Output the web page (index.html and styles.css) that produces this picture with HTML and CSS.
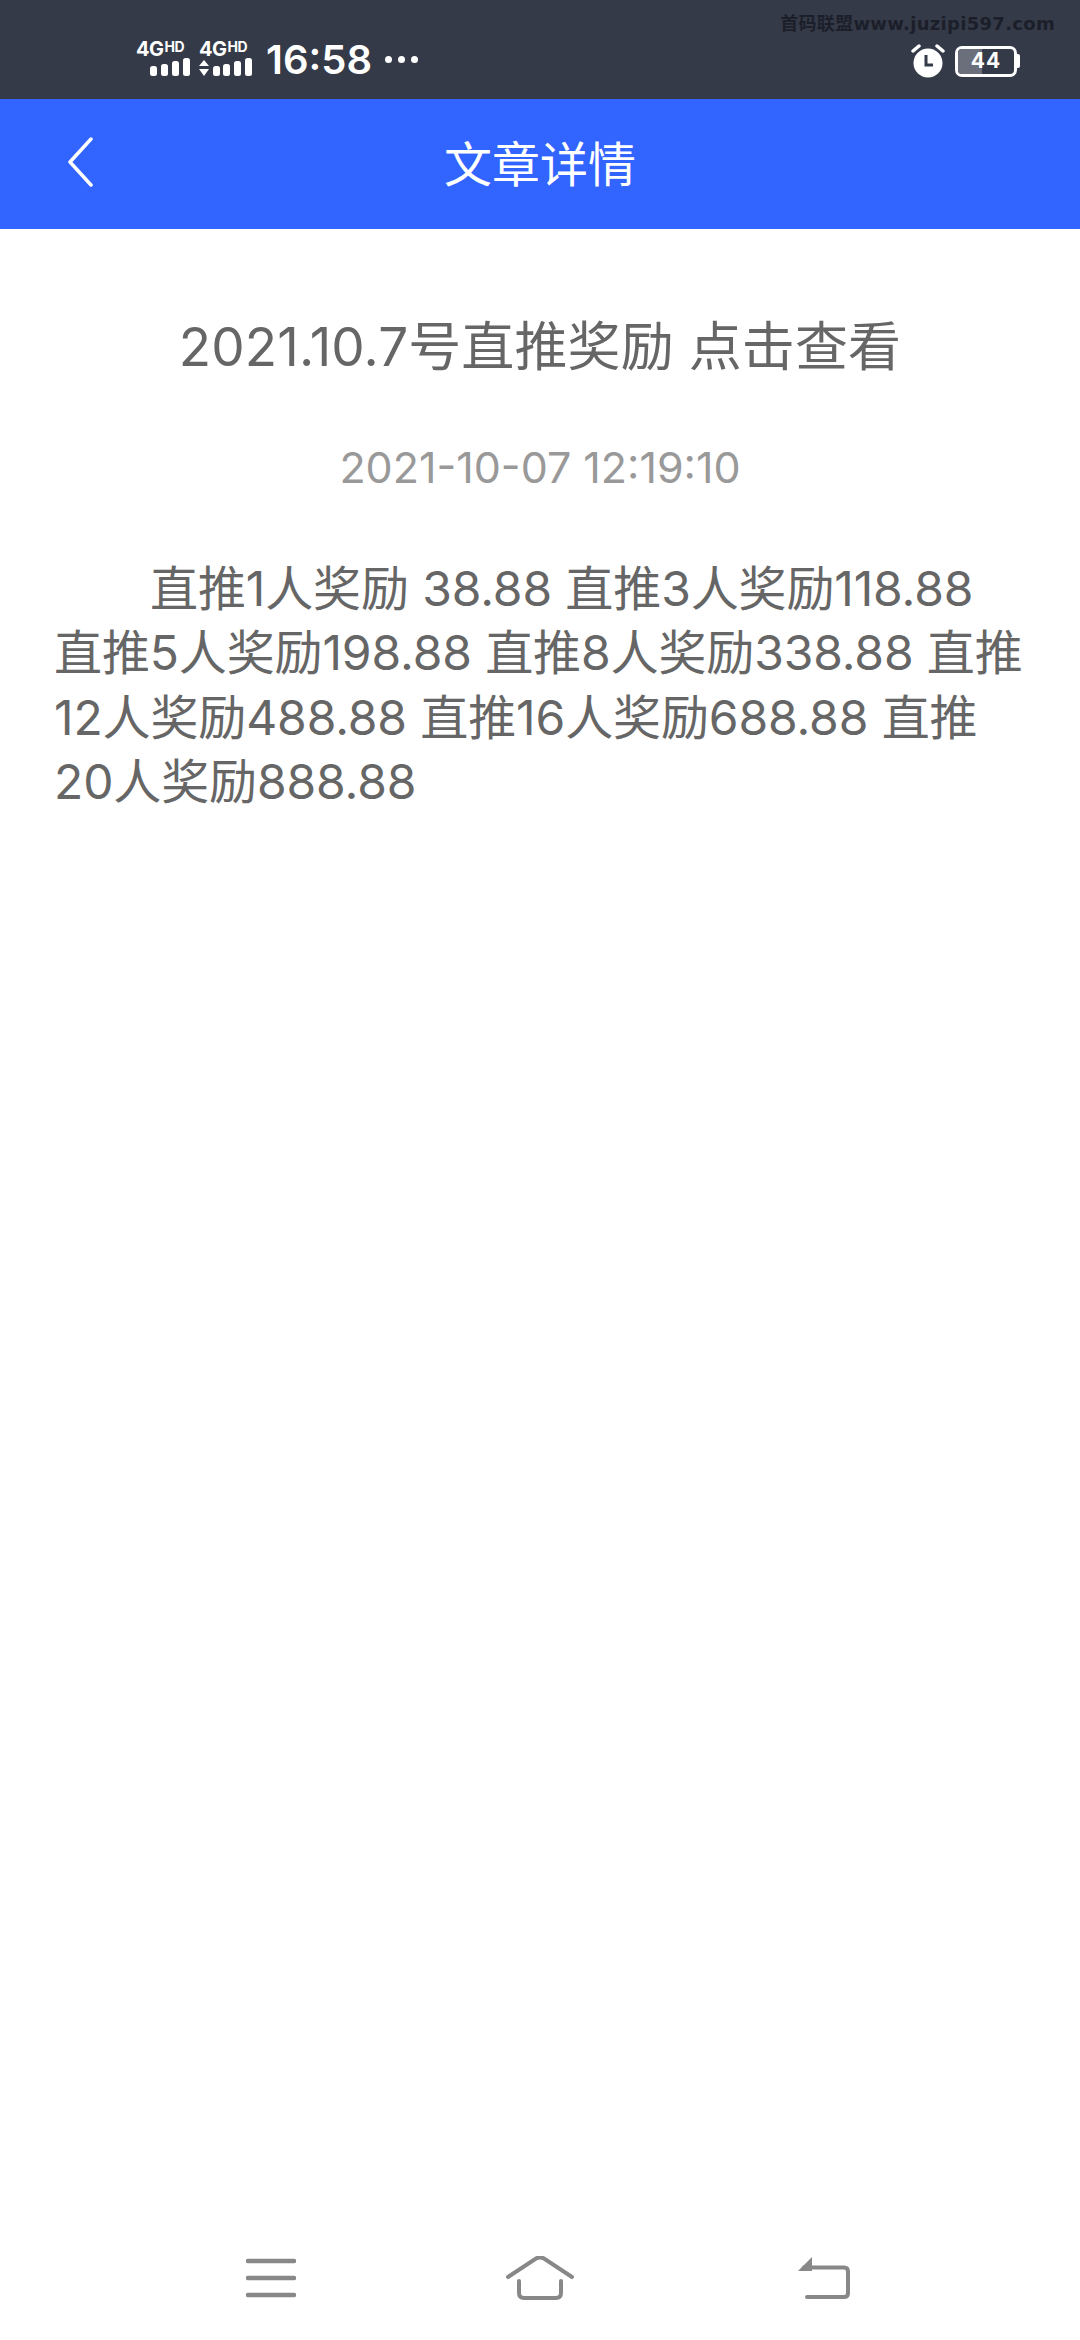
FILE: index.html
```html
<!DOCTYPE html>
<html lang="zh">
<head>
<meta charset="utf-8">
<title>文章详情</title>
<link rel="stylesheet" href="styles.css">
</head>
<body>
<div class="page">
  <div class="status">
    <div class="status-left">
      <div class="sig">
        <div class="net">4G<sup>HD</sup></div>
        <svg class="bars" width="40" height="19" viewBox="0 0 40 19"><g fill="#fff"><rect x="0" y="8" width="7" height="10" rx="2.500"/><rect x="11" y="6" width="7" height="12" rx="2.500"/><rect x="22" y="3" width="7" height="15" rx="2.500"/><rect x="33" y="0" width="7" height="18" rx="2.500"/></g></svg>
      </div>
      <div class="sig sig-data">
        <div class="net">4G<sup>HD</sup></div>
        <svg class="bars" width="53" height="19" viewBox="0 0 53 19"><g fill="#fff"><path d="M0 8 5 2l5 6zM0 11h10l-5 7z"/><rect x="14" y="8" width="7" height="10" rx="2.500"/><rect x="24" y="6" width="7" height="12" rx="2.500"/><rect x="35" y="3" width="7" height="15" rx="2.500"/><rect x="46" y="0" width="7" height="18" rx="2.500"/></g></svg>
      </div>
      <span class="time">16:58</span>
      <span class="dots"><i></i><i></i><i></i></span>
    </div>
    <div class="status-right">
      <div class="mark">首码联盟www.juzipi597.com</div>
      <div class="indicators">
        <svg class="alarm" width="34" height="34" viewBox="0 0 34 34"><circle cx="17" cy="19" r="14.500" fill="#fff"/><path d="M15 11v10h7" fill="none" stroke="#343a48" stroke-width="3"/><path d="M2 7 8 2M32 7l-6-5" stroke="#fff" stroke-width="3.500" stroke-linecap="round"/></svg>
        <div class="battery"><div class="level"></div><span class="pct">44</span></div>
        <div class="nub"></div>
      </div>
    </div>
  </div>
  <header class="topbar">
    <svg class="back" width="28" height="50" viewBox="0 0 28 50"><path d="M25 2 4 25l21 23" fill="none" stroke="#fff" stroke-width="3.500" stroke-linecap="round" stroke-linejoin="round"/></svg>
    <h1 class="heading">文章详情</h1>
  </header>
  <main class="article">
    <h2 class="title">2021.10.7号直推奖励 点击查看</h2>
    <div class="date">2021-10-07 12:19:10</div>
    <p class="body">直推1人奖励 38.88 直推3人奖励118.88 直推5人奖励198.88 直推8人奖励338.88 直推12人奖励488.88 直推16人奖励688.88 直推20人奖励888.88</p>
  </main>
  <nav class="navbar">
    <svg width="50" height="40" viewBox="0 0 50 40"><path d="M2 3h46M2 20h46M2 37h46" stroke="#888" stroke-width="4.500" stroke-linecap="round"/></svg>
    <svg width="82" height="44" viewBox="0 0 82 44"><path d="M2 21 30 2.500q4-2 8 0L66 21" fill="none" stroke="#888" stroke-width="4" stroke-linecap="round"/><path d="M13 25v12q0 5 5 5h32q5 0 5-5V25" fill="none" stroke="#888" stroke-width="4" stroke-linecap="round"/></svg>
    <svg width="52" height="42" viewBox="0 0 52 42"><path d="M14 0v14H0z" fill="#888"/><path d="M6 10.500h40q4 0 4 4V36q0 4-4 4H9" fill="none" stroke="#888" stroke-width="4" stroke-linecap="round"/></svg>
  </nav>
</div>
</body>
</html>
```
FILE: styles.css
```css
* { box-sizing: border-box; }
html, body { margin: 0; padding: 0; }
body { background: #fff; font-family: Inter, Roboto, "Noto Sans CJK SC", sans-serif; }
.page { width: 1080px; height: 2340px; display: flex; flex-direction: column; overflow: hidden; }

.status { height: 99px; flex: none; background: #343a48; display: flex; justify-content: space-between; color: #fff; }
.status-left { display: flex; align-items: flex-start; padding: 41px 0 0 136px; height: 99px; }
.sig { display: flex; flex-direction: column; width: 54px; height: 37px; }
.sig-data { width: 53px; margin-left: 9px; }
.net { font: 700 20px/17px Inter, sans-serif; white-space: nowrap; letter-spacing: -0.5px; }
.net sup { font-size: 14px; line-height: 10px; vertical-align: 4px; margin-left: 1px; }
.bars { display: block; align-self: flex-end; }
.time { font: 600 40px/38px Inter, Roboto, sans-serif; margin-left: 14px; margin-top: 0; letter-spacing: 0; }
.dots { display: flex; gap: 6px; margin-left: 13px; margin-top: 15px; }
.dots i { width: 7px; height: 7px; border-radius: 50%; background: #fff; display: block; }

.status-right { display: flex; flex-direction: column; align-items: flex-end; padding: 12px 25px 0 0; }
.mark { font: 700 18px/24px "DejaVu Sans", "Noto Sans CJK SC", sans-serif; color: #1c1f2a; letter-spacing: 0.3px; white-space: nowrap; }
.indicators { display: flex; align-items: center; margin-top: 8px; padding-right: 35px; }
.alarm { margin-right: 10px; }
.battery { width: 62px; height: 31px; border: 3px solid #fff; border-radius: 7px; position: relative; display: flex; align-items: center; justify-content: center; overflow: hidden; }
.level { position: absolute; left: 0; top: 0; bottom: 0; width: 42%; background: #6b6f7c; }
.pct { position: relative; font: 700 21px/24px Inter, sans-serif; letter-spacing: 1px; }
.nub { width: 3px; height: 14px; background: #fff; border-radius: 0 2px 2px 0; }

.topbar { height: 130px; flex: none; background: #3264ff; display: flex; align-items: center; justify-content: center; position: relative; }
.back { position: absolute; left: 66px; top: 38px; }
.heading { margin: 0 0 7px; font: 400 48px/60px "Noto Sans CJK SC", sans-serif; color: #fff; }

.article { flex: 1; padding: 0 54px; color: #666; }
.title { margin: 0; padding-top: 83px; font-weight: 400; font-size: 53px; line-height: 70px; letter-spacing: 0.1px; text-align: center; white-space: nowrap; }
.date { margin-top: 55px; text-align: center; color: #999; font-size: 43px; line-height: 60px; }
.body { margin: 60px 0 0; font-size: 48px; line-height: 64.300px; text-indent: 96px; letter-spacing: -0.12px; }

.navbar { flex: none; height: 110px; padding: 0 230px 15px 246px; display: flex; justify-content: space-between; align-items: center; }
```
